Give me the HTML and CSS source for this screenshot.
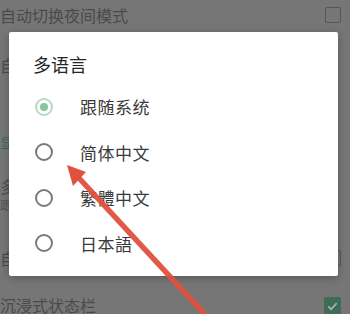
FILE: index.html
```html
<!DOCTYPE html>
<html lang="zh">
<head>
<meta charset="utf-8">
<link rel="stylesheet" href="styles.css">
</head>
<body>
<div class="settings">
  <div class="row row-1"><span class="label">自动切换夜间模式</span><span class="check"></span></div>
  <div class="row row-2"><span class="label">自动检查更新</span></div>
  <div class="section">显示设置</div>
  <div class="item">
    <div class="label">多语言</div>
    <div class="sub">跟随系统</div>
  </div>
  <div class="row row-5"><span class="label">自动横屏模式</span><span class="check"></span></div>
  <div class="row row-6"><span class="label">沉浸式状态栏</span><span class="check on"><svg viewBox="0 0 16 16" width="16" height="16"><path d="M3.5 8.5 L6.5 11.5 L12.5 5" fill="none" stroke="#9fb8ab" stroke-width="1.8"/></svg></span></div>
</div>

<div class="dialog">
  <div class="title">多语言</div>
  <ul class="options">
    <li class="option selected"><span class="radio"></span><span class="text">跟随系统</span></li>
    <li class="option"><span class="radio"></span><span class="text">简体中文</span></li>
    <li class="option"><span class="radio"></span><span class="text">繁體中文</span></li>
    <li class="option"><span class="radio"></span><span class="text">日本語</span></li>
  </ul>
</div>

<svg class="arrow" width="350" height="314" viewBox="0 0 350 314">
  <line x1="212" y1="322" x2="78" y2="177" stroke="#e0523f" stroke-width="5.5" stroke-linecap="round" opacity="0.95"/>
  <polygon points="67,165 86,172 73,186" fill="#e0523f"/>
</svg>
</body>
</html>
```
FILE: styles.css
```css
html, body {
  margin: 0;
  padding: 0;
}
body {
  width: 350px;
  height: 314px;
  overflow: hidden;
  background: #767676;
  font-family: "Noto Sans CJK SC", "Noto Sans", sans-serif;
  position: relative;
}
.settings {
  display: flex;
  flex-direction: column;
  color: #4a4a4a;
}
.row {
  display: flex;
  align-items: center;
  justify-content: space-between;
  padding-right: 9px;
  font-size: 16px;
}
.row-1 { height: 30px; }
.row-2 { height: 70px; }
.section {
  margin-top: 28px;
  height: 28px;
  line-height: 28px;
  font-size: 14px;
  color: #3d6a55;
}
.item {
  height: 60px;
  padding-top: 19px;
  box-sizing: border-box;
}
.item .label {
  font-size: 16px;
  line-height: 22px;
}
.item .sub {
  font-size: 12px;
  line-height: 16px;
  color: #555;
}
.row-5 { margin-top: 14px; height: 56px; }
.row-6 { height: 38px; }
.check {
  width: 16px;
  height: 16px;
  box-sizing: border-box;
  border: 1.5px solid #555;
  border-radius: 2px;
  display: inline-flex;
}
.check.on {
  background: #3f6b57;
  border-color: #3f6b57;
  width: 17px;
  height: 17px;
}
.check.on svg { display: block; }

.dialog {
  position: absolute;
  left: 9px;
  top: 32px;
  width: 329px;
  height: 244px;
  background: #fff;
  border-radius: 2px;
  box-shadow: 0 2px 8px rgba(0,0,0,0.25);
  box-sizing: border-box;
  padding-bottom: 10px;
}
.title {
  padding: 20px 0 8px 24px;
  font-size: 18px;
  line-height: 24px;
  color: #262626;
}
.options {
  list-style: none;
  margin: 0;
  padding: 0;
}
.option {
  height: 45.5px;
  display: flex;
  align-items: center;
  padding-left: 26px;
}
.radio {
  width: 18px;
  height: 18px;
  box-sizing: border-box;
  border: 2px solid #7a7a7a;
  border-radius: 50%;
  display: inline-flex;
  align-items: center;
  justify-content: center;
}
.selected .radio {
  border-color: #b4dcc1;
}
.selected .radio::after {
  content: "";
  width: 8px;
  height: 8px;
  border-radius: 50%;
  background: #86c69c;
}
.text {
  margin-left: 27px;
  font-size: 17px;
  color: #3a3a3a;
  letter-spacing: 0.5px;
}
.arrow {
  position: absolute;
  left: 0;
  top: 0;
  pointer-events: none;
}
```
